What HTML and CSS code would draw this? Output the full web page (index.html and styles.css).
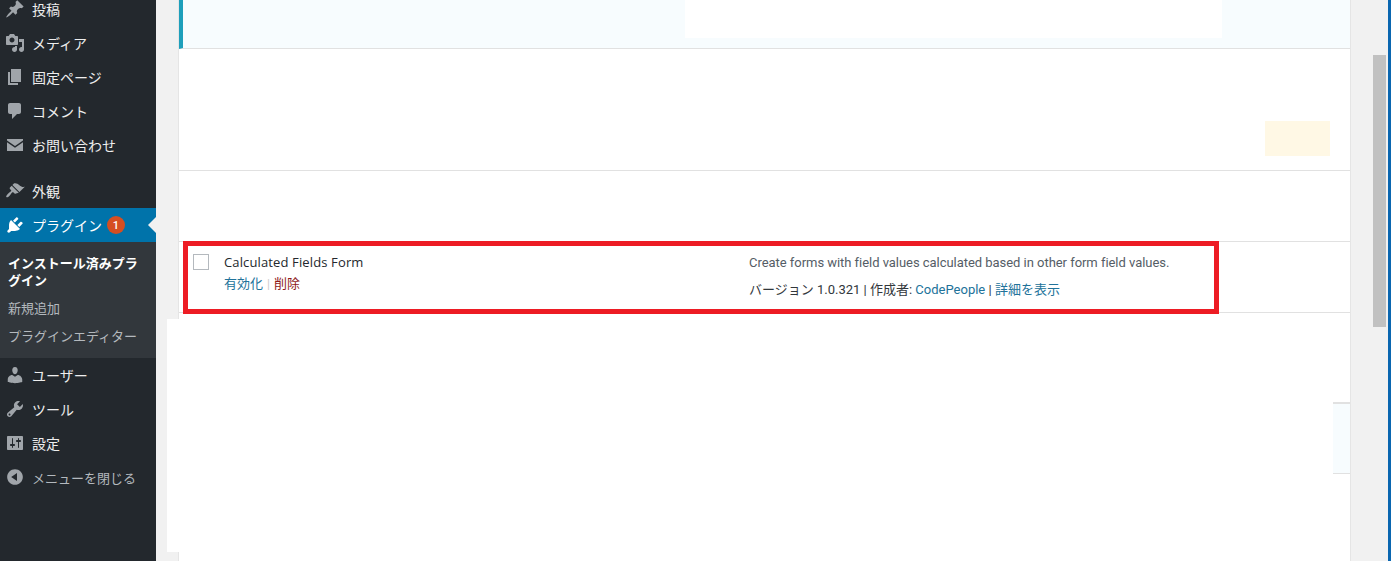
FILE: index.html
```
<!DOCTYPE html>
<html lang="ja">
<head>
<meta charset="utf-8">
<title>プラグイン</title>
<link rel="stylesheet" href="styles.css">
</head>
<body>
<div class="page">
  <nav class="sidebar">
    <ul class="menu">
      <li class="item"><svg class="icon" viewBox="0 0 20 20"><path d="M10.44 3.02l1.82-1.82 6.36 6.35-1.83 1.82c-1.05-.68-2.48-.57-3.41.36l-.75.75c-.92.93-1.04 2.35-.35 3.41l-1.83 1.82-2.41-2.41-2.8 2.79c-.42.42-3.38 2.71-3.8 2.29s1.86-3.39 2.28-3.81l2.79-2.79L4.1 9.36l1.83-1.82c1.05.69 2.48.57 3.4-.36l.75-.75c.93-.92 1.05-2.35.36-3.41z"/></svg><span>投稿</span></li>
      <li class="item"><svg class="icon" viewBox="0 0 20 20"><path d="M13 11V4c0-.55-.45-1-1-1h-1.67L9 1H5L3.67 3H2c-.55 0-1 .45-1 1v7c0 .55.45 1 1 1h10c.55 0 1-.45 1-1zM7 4.5c1.38 0 2.5 1.12 2.5 2.5S8.38 9.5 7 9.5 4.5 8.38 4.5 7 5.62 4.5 7 4.5zM14 6h5v10.5c0 1.38-1.12 2.5-2.5 2.5S14 17.88 14 16.5s1.12-2.5 2.5-2.5c.17 0 .34.02.5.05V9h-3V6zm-4 8.05V13h2v3.5c0 1.38-1.12 2.5-2.5 2.5S7 17.88 7 16.5 8.12 14 9.5 14c.17 0 .34.02.5.05z"/></svg><span>メディア</span></li>
      <li class="item"><svg class="icon" viewBox="0 0 20 20"><path d="M6 15V2h10v13H6zm-1 1h8v2H3V5h2v11z"/></svg><span>固定ページ</span></li>
      <li class="item"><svg class="icon" viewBox="0 0 20 20"><path d="M5 2h9c1.1 0 2 .9 2 2v7c0 1.1-.9 2-2 2h-2l-5 5v-5H5c-1.1 0-2-.9-2-2V4c0-1.1.9-2 2-2z"/></svg><span>コメント</span></li>
      <li class="item"><svg class="icon" viewBox="0 0 20 20"><path d="M2 4h16v1.4l-8 5.6-8-5.6zM2 7.2l8 5.6 8-5.6V16H2z"/></svg><span>お問い合わせ</span></li>
      <li class="separator"></li>
      <li class="item"><svg class="icon" viewBox="0 0 20 20"><path d="M14.48 11.06L7.41 3.99l1.5-1.5c.5-.56 2.3-.47 3.51.32 1.21.8 1.43 1.28 2.91 2.1 1.18.64 2.45 1.26 4.45.85zm-.71.71L6.7 4.7 4.93 6.47c-.39.39-.39 1.02 0 1.41l1.06 1.06c.39.39.39 1.03 0 1.42-.6.6-1.43 1.11-2.21 1.69-.35.26-.7.53-1.01.84-1.34 1.34-1.97 2.61-1.4 3.18s1.84-.06 3.18-1.4c.31-.31.58-.66.84-1.01.58-.78 1.09-1.61 1.69-2.21.39-.39 1.03-.39 1.42 0l1.06 1.06c.39.39 1.02.39 1.41 0z"/></svg><span>外観</span></li>
      <li class="item current"><svg class="icon" viewBox="0 0 20 20"><path d="M13.11 4.36L9.87 7.6 8 5.73l3.24-3.24c.35-.34 1.05-.2 1.56.32.52.51.66 1.21.31 1.55zm-8 1.77l.91-1.12 9.01 9.01-1.19.84c-.71.71-2.63 1.16-3.82 1.16H6.14L4.9 17.26c-.59.59-1.54.59-2.12 0-.59-.58-.59-1.53 0-2.12l1.24-1.24v-3.88c0-1.13.4-3.19 1.09-3.89zm7.26 3.97l3.24-3.24c.34-.35 1.04-.21 1.55.31.52.51.66 1.21.31 1.55l-3.24 3.25z"/></svg><span>プラグイン</span><b class="badge">1</b></li>
      <li class="submenu">
        <a class="sub sub-active">インストール済みプラグイン</a>
        <a class="sub">新規追加</a>
        <a class="sub">プラグインエディター</a>
      </li>
      <li class="item"><svg class="icon" viewBox="0 0 20 20"><path d="M10 9.25c-2.27 0-2.73-3.44-2.73-3.44C7 4.02 7.82 2 9.97 2c2.16 0 2.98 2.02 2.71 3.81 0 0-.41 3.44-2.68 3.44zm0 2.57L12.72 10c2.39 0 4.52 2.33 4.52 4.53v2.49s-3.65 1.13-7.24 1.13c-3.65 0-7.24-1.13-7.24-1.13v-2.49c0-2.25 1.94-4.48 4.47-4.48z"/></svg><span>ユーザー</span></li>
      <li class="item"><svg class="icon" viewBox="0 0 20 20"><path d="M16.68 9.77c-1.34 1.34-3.3 1.67-4.95.99l-5.41 6.52c-.99.99-2.59.99-3.58 0s-.99-2.59 0-3.57l6.52-5.42c-.68-1.65-.35-3.61.99-4.95 1.28-1.28 3.12-1.62 4.72-1.06l-2.89 2.89 2.82 2.82 2.86-2.87c.53 1.58.18 3.39-1.08 4.65zM3.81 16.21c.4.39 1.04.39 1.43 0 .4-.4.4-1.04 0-1.43-.39-.4-1.03-.4-1.43 0-.39.39-.39 1.03 0 1.43z"/></svg><span>ツール</span></li>
      <li class="item"><svg class="icon" viewBox="0 0 20 20"><path d="M18 16V4c0-.55-.45-1-1-1H3c-.55 0-1 .45-1 1v12c0 .55.45 1 1 1h14c.55 0 1-.45 1-1zM8 11h1c.55 0 1 .45 1 1s-.45 1-1 1H8v1.5c0 .28-.22.5-.5.5s-.5-.22-.5-.5V13H6c-.55 0-1-.45-1-1s.45-1 1-1h1V5.5c0-.28.22-.5.5-.5s.5.22.5.5V11zm5-2h-1c-.55 0-1-.45-1-1s.45-1 1-1h1V5.5c0-.28.22-.5.5-.5s.5.22.5.5V7h1c.55 0 1 .45 1 1s-.45 1-1 1h-1v5.5c0 .28-.22.5-.5.5s-.5-.22-.5-.5V9z"/></svg><span>設定</span></li>
      <li class="item collapse"><svg class="icon" viewBox="0 0 20 20"><path d="M10 2.16c4.33 0 7.84 3.51 7.84 7.84s-3.51 7.84-7.84 7.84S2.16 14.33 2.16 10 5.71 2.16 10 2.16zm2 11.72V6.12L6.18 9.97z"/></svg><span>メニューを閉じる</span></li>
    </ul>
  </nav>

  <main class="content">
    <div class="table">
      <div class="row row-notice"></div>
      <div class="row row-tall"></div>
      <div class="row row-std"></div>
      <div class="row row-std plugin">
        <div class="check-cell"><span class="checkbox"></span></div>
        <div class="title-cell">
          <div class="plugin-name">Calculated Fields Form</div>
          <div class="actions"><a class="link">有効化</a><span class="pipe">|</span><a class="danger">削除</a></div>
        </div>
        <div class="desc-cell">
          <div class="desc">Create forms with field values calculated based in other form field values.</div>
          <div class="meta">バージョン 1.0.321 | 作成者: <a class="link">CodePeople</a> | <a class="link">詳細を表示</a></div>
        </div>
      </div>
      <div class="row row-gap"></div>
      <div class="row row-std row-active"></div>
      <div class="row-rest"></div>
    </div>
  </main>

  <aside class="rail">
    <div class="track"><div class="thumb"></div></div>
    <div class="edge"></div>
  </aside>

  <div class="patch patch-notice"></div>
  <div class="patch patch-yellow"></div>
  <div class="patch patch-large"></div>
  <div class="highlight"></div>
</div>
</body>
</html>
```
FILE: styles.css
```
* { box-sizing: border-box; }
html, body { margin: 0; padding: 0; height: 100%; overflow: hidden; }
body {
  background: #f1f1f1;
  font-family: Roboto, "Noto Sans CJK JP", sans-serif;
  font-size: 13px;
  color: #32373c;
}
.page {
  position: relative;
  display: flex;
  width: 1391px;
  height: 561px;
  overflow: hidden;
}

/* Sidebar */
.sidebar {
  flex: 0 0 156px;
  background: #23282d;
  color: #eee;
  overflow: hidden;
}
.menu { list-style: none; margin: -8px 0 0; padding: 0; }
.item {
  position: relative;
  display: flex;
  align-items: center;
  gap: 7px;
  height: 34px;
  padding-left: 5px;
  font-size: 14px;
  white-space: nowrap;
}
.icon { flex: 0 0 20px; width: 20px; height: 20px; fill: #a0a5aa; }
.separator { height: 12px; }
.current { background: #0073aa; color: #fff; }
.current .icon { fill: #fff; }
.current::after {
  content: "";
  position: absolute;
  right: 0;
  top: 9px;
  border: 8px solid transparent;
  border-right-color: #f1f1f1;
  border-left-width: 0;
}
.badge {
  display: flex;
  align-items: center;
  justify-content: center;
  width: 18px;
  height: 18px;
  margin-left: -2px;
  border-radius: 50%;
  background: #d54e21;
  color: #fff;
  font-size: 11px;
  font-weight: 500;
}
.submenu {
  display: flex;
  flex-direction: column;
  padding: 13px 0 2px 8px;
  background: #32373c;
  color: #b4b9be;
  font-size: 13px;
  line-height: 17px;
}
.sub { display: block; padding: 0 14px 11px 0; white-space: nowrap; }
.sub-active { color: #fff; font-weight: 700; white-space: normal; }
.collapse { color: #b4b9be; font-size: 13px; }

/* Content */
.content { flex: 1 1 auto; padding-left: 22px; }
.table {
  height: 100%;
  display: flex;
  flex-direction: column;
  background: #fff;
  border-left: 1px solid #e5e5e5;
  border-right: 1px solid #e5e5e5;
}
.row { border-bottom: 1px solid #e1e1e1; flex: 0 0 auto; }
.row-notice {
  height: 49px;
  background: #f7fcfe;
  border-left: 4px solid #1e9fbb;
}
.row-tall { height: 122px; }
.row-std { height: 71px; }
.row-gap { height: 90px; }
.row-active { background: #f7fcfe; border-top: 1px solid #e1e1e1; }
.row-rest { flex: 1 1 auto; }

.plugin {
  display: grid;
  grid-template-columns: 45px 525px 1fr;
  font-size: 13px;
}
.check-cell { padding: 12px 0 0 14px; }
.checkbox {
  display: block;
  width: 16px;
  height: 16px;
  background: #fff;
  border: 1px solid #b4b9be;
}
.title-cell { padding-top: 10px; }
.plugin-name {
  line-height: 20px;
  font-family: "Open Sans", "Noto Sans CJK JP", sans-serif;
  letter-spacing: .13px;
  color: #23282d;
}
.actions { margin-top: 2px; line-height: 20px; color: #ddd; }
.pipe { margin: 0 4px; color: #ccc; font-size: 12px; }
.link { color: #21729a; }
.danger { color: #8f1a1a; }
.desc-cell { padding-top: 11px; }
.desc { line-height: 20px; letter-spacing: -.04px; color: #555d66; white-space: nowrap; }
.meta { margin-top: 7px; line-height: 20px; color: #32373c; white-space: nowrap; }

/* Scroll rail */
.rail { flex: 0 0 40px; display: flex; justify-content: flex-end; }
.track { width: 15px; padding: 55px 2px 0 0; background: #f1f1f1; }
.thumb { width: 13px; height: 272px; background: #c1c1c1; }
.edge { width: 3px; background: #0a66b0; }

/* Masked regions laid over the screen */
.patch { position: absolute; background: #fff; }
.patch-notice { left: 685px; top: 0; width: 537px; height: 38px; }
.patch-yellow { left: 1265px; top: 121px; width: 65px; height: 35px; background: #fff8e5; }
.patch-large { left: 167px; top: 319px; width: 1166px; height: 233px; }
.highlight {
  position: absolute;
  left: 183px;
  top: 241px;
  width: 1036px;
  height: 73px;
  border: 5px solid #ed1c24;
}
```
